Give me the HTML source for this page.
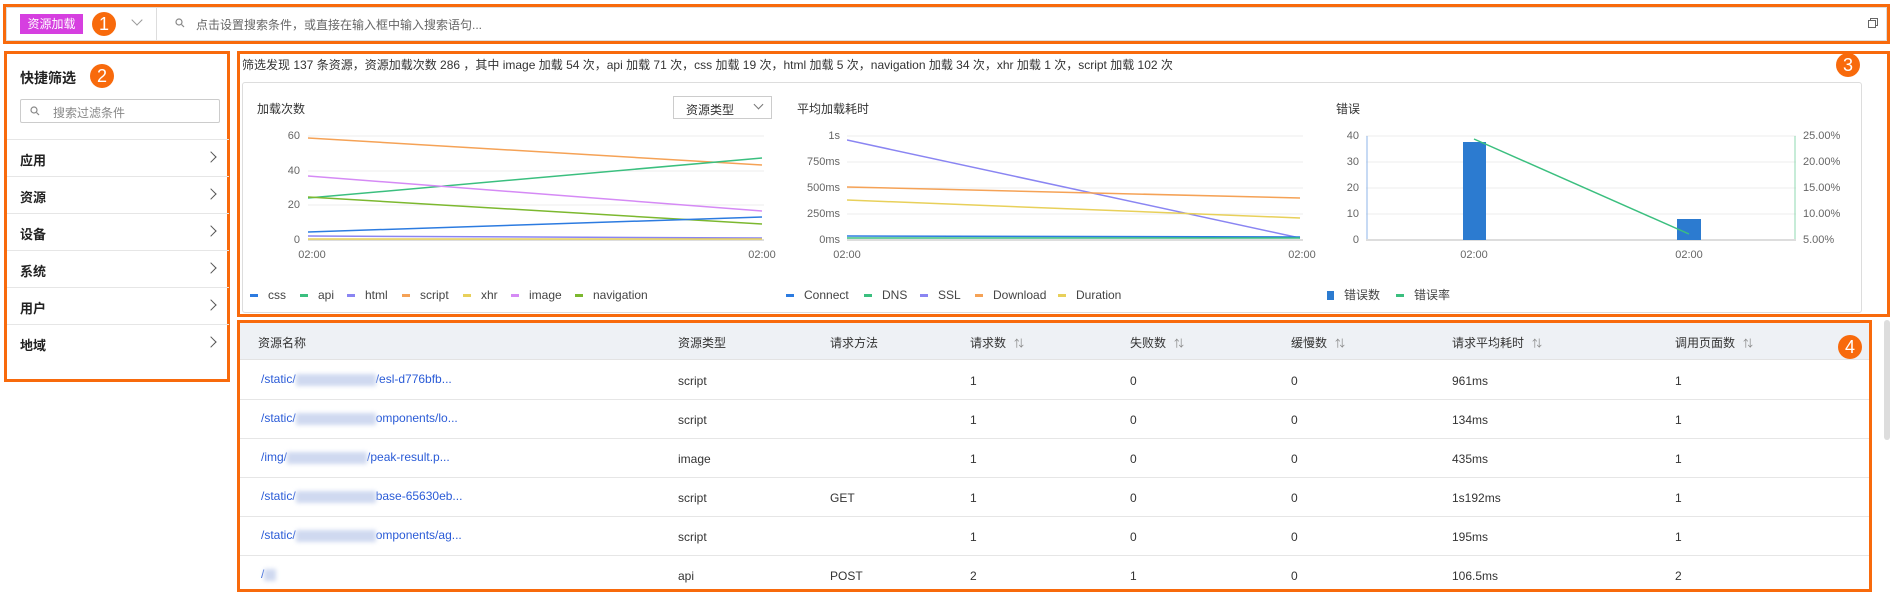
<!DOCTYPE html>
<html><head><meta charset="utf-8"><style>
*{box-sizing:border-box;margin:0;padding:0}
body{width:1892px;height:592px;background:#fff;position:relative;overflow:hidden;font-family:"Liberation Sans","Noto Sans CJK SC",sans-serif;font-size:12px;color:#333}
.a{position:absolute;white-space:nowrap}
.ob{position:absolute;border:3px solid #f86a0c}
.circ{position:absolute;width:24px;height:24px;border-radius:50%;background:#f86a0c;color:#fff;font-size:18px;text-align:center;line-height:24px}
.row{position:absolute;left:7px;width:222px;height:37px;border-top:1px solid #e6e6e6;font-size:13px;font-weight:bold;color:#222}
.row span{position:absolute;left:13px;top:10px}
.row i{position:absolute;left:200px;top:13px;width:8px;height:8px;border-right:1.6px solid #555;border-top:1.6px solid #555;transform:rotate(45deg)}
.ax{position:absolute;font-size:11px;color:#666;text-align:right}
.th{position:absolute;font-size:12px;color:#333;top:334px}
.td{position:absolute;font-size:12px;color:#333}
.lk{color:#2a5bd7}
.blur{display:inline-block;width:80px;height:12px;background:#cfd9f0;filter:blur(2px);vertical-align:middle}
.sort{color:#888;font-size:10px;margin-left:8px}
.lg{position:absolute;font-size:12px;color:#444;top:288px}
.lg b{display:inline-block;width:8px;height:3px;vertical-align:middle;margin-right:10px}
</style></head><body>
<!-- top bar -->
<div class="ob" style="left:3px;top:4px;width:1887px;height:40px;border-width:3px"></div>
<div class="a" style="left:6px;top:7px;width:1881px;height:34px;border:1px solid #ddd"></div>
<div class="a" style="left:156px;top:8px;width:1px;height:32px;background:#ddd"></div>
<div class="a" style="left:20px;top:14px;width:63px;height:20px;background:#d63fe0;color:#fff;font-size:12px;text-align:center;line-height:20px">资源加载</div>
<div class="circ" style="left:92px;top:12px">1</div>
<div class="a" style="left:133px;top:16px;width:8px;height:8px;border-right:1.3px solid #999;border-bottom:1.3px solid #999;transform:rotate(45deg)"></div>
<svg class="a" style="left:175px;top:18px" width="10" height="10"><circle cx="4" cy="4" r="3" fill="none" stroke="#888" stroke-width="1.2"/><line x1="6.5" y1="6.5" x2="9" y2="9" stroke="#888" stroke-width="1.2"/></svg>
<div class="a" style="left:196px;top:16px;color:#666;font-size:12px">点击设置搜索条件，或直接在输入框中输入搜索语句...</div>
<svg class="a" style="left:1868px;top:18px" width="10" height="10"><rect x="0.5" y="2.5" width="7" height="7" fill="none" stroke="#666"/><path d="M2.5 2.5V0.5H9.5V7.5H7.5" fill="none" stroke="#666"/></svg>

<!-- sidebar -->
<div class="ob" style="left:4px;top:51px;width:226px;height:331px"></div>
<div class="a" style="left:20px;top:68px;font-size:14px;font-weight:bold;color:#222">快捷筛选</div>
<div class="circ" style="left:90px;top:64px">2</div>
<div class="a" style="left:20px;top:99px;width:200px;height:24px;border:1px solid #ccc;border-radius:2px"></div>
<svg class="a" style="left:30px;top:106px" width="10" height="10"><circle cx="4" cy="4" r="3" fill="none" stroke="#888" stroke-width="1.2"/><line x1="6.5" y1="6.5" x2="9" y2="9" stroke="#888" stroke-width="1.2"/></svg>
<div class="a" style="left:53px;top:104px;color:#888;font-size:12px">搜索过滤条件</div>
<div class="row" style="top:139px"><span>应用</span><i></i></div>
<div class="row" style="top:176px"><span>资源</span><i></i></div>
<div class="row" style="top:213px"><span>设备</span><i></i></div>
<div class="row" style="top:250px"><span>系统</span><i></i></div>
<div class="row" style="top:287px"><span>用户</span><i></i></div>
<div class="row" style="top:324px"><span>地域</span><i></i></div>

<!-- chart section -->
<div class="ob" style="left:237px;top:51px;width:1653px;height:266px"></div>
<div class="a" style="left:242px;top:56px;font-size:12px;color:#333">筛选发现 137 条资源，资源加载次数 286 ，其中 image 加载 54 次，api 加载 71 次，css 加载 19 次，html 加载 5 次，navigation 加载 34 次，xhr 加载 1 次，script 加载 102 次</div>
<div class="circ" style="left:1836px;top:53px">3</div>
<div class="a" style="left:242px;top:82px;width:1620px;height:231px;border:1px solid #ddd;border-radius:3px"></div>

<div class="a" style="left:257px;top:100px;font-size:12px">加载次数</div>
<div class="a" style="left:673px;top:96px;width:99px;height:23px;border:1px solid #ccc;font-size:12px;padding:4px 0 0 12px">资源类型</div>
<div class="a" style="left:755px;top:101px;width:7px;height:7px;border-right:1.2px solid #777;border-bottom:1.2px solid #777;transform:rotate(45deg)"></div>
<div class="ax" style="left:270px;top:130px;width:30px">60</div>
<div class="ax" style="left:270px;top:165px;width:30px">40</div>
<div class="ax" style="left:270px;top:199px;width:30px">20</div>
<div class="ax" style="left:270px;top:234px;width:30px">0</div>
<div class="ax" style="left:292px;top:249px;width:40px;text-align:center">02:00</div>
<div class="ax" style="left:742px;top:249px;width:40px;text-align:center">02:00</div>
<svg class="a" style="left:308px;top:130px" width="456" height="115">
<g stroke="#eee"><line x1="0" y1="6" x2="456" y2="6"/><line x1="0" y1="41" x2="456" y2="41"/><line x1="0" y1="75" x2="456" y2="75"/></g>
<line x1="0" y1="110" x2="456" y2="110" stroke="#ddd" stroke-width="2"/>
<g fill="none" stroke-width="1.5">
<line x1="0" y1="8" x2="454" y2="35" stroke="#f5a256"/>
<line x1="0" y1="68" x2="454" y2="28" stroke="#3bbf7f"/>
<line x1="0" y1="46" x2="454" y2="81" stroke="#d58af5"/>
<line x1="0" y1="67" x2="454" y2="94" stroke="#7cb82f"/>
<line x1="0" y1="102" x2="454" y2="87" stroke="#2c7be0"/>
<line x1="0" y1="106" x2="454" y2="108" stroke="#8a85f2"/>
<line x1="0" y1="109" x2="454" y2="109" stroke="#e8d05a"/>
</g></svg>
<div class="lg" style="left:250px"><b style="background:#2c7be0"></b>css</div>
<div class="lg" style="left:300px"><b style="background:#3bbf7f"></b>api</div>
<div class="lg" style="left:347px"><b style="background:#8a85f2"></b>html</div>
<div class="lg" style="left:402px"><b style="background:#f5a256"></b>script</div>
<div class="lg" style="left:463px"><b style="background:#e8d05a"></b>xhr</div>
<div class="lg" style="left:511px"><b style="background:#d58af5"></b>image</div>
<div class="lg" style="left:575px"><b style="background:#7cb82f"></b>navigation</div>

<div class="a" style="left:797px;top:100px;font-size:12px">平均加载耗时</div>
<div class="ax" style="left:790px;top:130px;width:50px">1s</div>
<div class="ax" style="left:790px;top:156px;width:50px">750ms</div>
<div class="ax" style="left:790px;top:182px;width:50px">500ms</div>
<div class="ax" style="left:790px;top:208px;width:50px">250ms</div>
<div class="ax" style="left:790px;top:234px;width:50px">0ms</div>
<div class="ax" style="left:827px;top:249px;width:40px;text-align:center">02:00</div>
<div class="ax" style="left:1282px;top:249px;width:40px;text-align:center">02:00</div>
<svg class="a" style="left:847px;top:130px" width="456" height="115">
<g stroke="#eee"><line x1="0" y1="6" x2="456" y2="6"/><line x1="0" y1="32" x2="456" y2="32"/><line x1="0" y1="58" x2="456" y2="58"/><line x1="0" y1="84" x2="456" y2="84"/></g>
<line x1="0" y1="110" x2="456" y2="110" stroke="#ddd" stroke-width="2"/>
<g fill="none" stroke-width="1.5">
<line x1="0" y1="10" x2="453" y2="108" stroke="#8a85f2"/>
<line x1="0" y1="57" x2="453" y2="68" stroke="#f5a256"/>
<line x1="0" y1="70" x2="453" y2="88" stroke="#e8d05a"/>
<line x1="0" y1="106" x2="453" y2="107" stroke="#2c7be0"/>
<line x1="0" y1="108" x2="453" y2="108" stroke="#3bbf7f"/>
</g></svg>
<div class="lg" style="left:786px"><b style="background:#2c7be0"></b>Connect</div>
<div class="lg" style="left:864px"><b style="background:#3bbf7f"></b>DNS</div>
<div class="lg" style="left:920px"><b style="background:#8a85f2"></b>SSL</div>
<div class="lg" style="left:975px"><b style="background:#f5a256"></b>Download</div>
<div class="lg" style="left:1058px"><b style="background:#e8d05a"></b>Duration</div>

<div class="a" style="left:1336px;top:100px;font-size:12px">错误</div>
<div class="ax" style="left:1335px;top:130px;width:24px">40</div>
<div class="ax" style="left:1335px;top:156px;width:24px">30</div>
<div class="ax" style="left:1335px;top:182px;width:24px">20</div>
<div class="ax" style="left:1335px;top:208px;width:24px">10</div>
<div class="ax" style="left:1335px;top:234px;width:24px">0</div>
<div class="ax" style="left:1803px;top:130px;text-align:left">25.00%</div>
<div class="ax" style="left:1803px;top:156px;text-align:left">20.00%</div>
<div class="ax" style="left:1803px;top:182px;text-align:left">15.00%</div>
<div class="ax" style="left:1803px;top:208px;text-align:left">10.00%</div>
<div class="ax" style="left:1803px;top:234px;text-align:left">5.00%</div>
<div class="ax" style="left:1454px;top:249px;width:40px;text-align:center">02:00</div>
<div class="ax" style="left:1669px;top:249px;width:40px;text-align:center">02:00</div>
<svg class="a" style="left:1366px;top:130px" width="432" height="115">
<g stroke="#eee"><line x1="0" y1="6" x2="430" y2="6"/><line x1="0" y1="32" x2="430" y2="32"/><line x1="0" y1="58" x2="430" y2="58"/><line x1="0" y1="84" x2="430" y2="84"/></g>
<line x1="1" y1="6" x2="1" y2="110" stroke="#8fb6e8"/>
<line x1="429" y1="6" x2="429" y2="110" stroke="#8fd8b0"/>
<line x1="0" y1="110" x2="430" y2="110" stroke="#ddd" stroke-width="2"/>
<rect x="97" y="12" width="23" height="98" fill="#2c7bd0"/>
<rect x="311" y="89" width="24" height="21" fill="#2c7bd0"/>
<line x1="108" y1="9" x2="323" y2="104" stroke="#3bbf7f" stroke-width="1.5"/>
</svg>
<div class="lg" style="left:1327px;top:286px"><b style="background:#2c7bd0;width:7px;height:9px"></b>错误数</div>
<div class="lg" style="left:1396px;top:286px"><b style="background:#3bbf7f"></b>错误率</div>

<!-- table -->
<div class="ob" style="left:237px;top:320px;width:1635px;height:272px"></div>
<div class="a" style="left:1884px;top:320px;width:6px;height:120px;background:#ddd;border-radius:3px"></div>
<div class="a" style="left:240px;top:323px;width:1629px;height:37px;background:#eef1f5;border-bottom:1px solid #e3e3e3"></div>
<div class="th" style="left:258px">资源名称</div>
<div class="th" style="left:678px">资源类型</div>
<div class="th" style="left:830px">请求方法</div>
<div class="th" style="left:970px">请求数<span class="sort">⇅</span></div>
<div class="th" style="left:1130px">失败数<span class="sort">⇅</span></div>
<div class="th" style="left:1291px">缓慢数<span class="sort">⇅</span></div>
<div class="th" style="left:1452px">请求平均耗时<span class="sort">⇅</span></div>
<div class="th" style="left:1675px">调用页面数<span class="sort">⇅</span></div>
<div class="circ" style="left:1838px;top:335px">4</div>

<div class="a" style="left:240px;top:399px;width:1629px;height:1px;background:#e6e6e6"></div>
<div class="a" style="left:240px;top:438px;width:1629px;height:1px;background:#e6e6e6"></div>
<div class="a" style="left:240px;top:477px;width:1629px;height:1px;background:#e6e6e6"></div>
<div class="a" style="left:240px;top:516px;width:1629px;height:1px;background:#e6e6e6"></div>
<div class="a" style="left:240px;top:555px;width:1629px;height:1px;background:#e6e6e6"></div>

<div class="td lk" style="left:261px;top:372px">/static/<span class="blur"></span>/esl-d776bfb...</div>
<div class="td lk" style="left:261px;top:411px">/static/<span class="blur"></span>omponents/lo...</div>
<div class="td lk" style="left:261px;top:450px">/img/<span class="blur"></span>/peak-result.p...</div>
<div class="td lk" style="left:261px;top:489px">/static/<span class="blur"></span>base-65630eb...</div>
<div class="td lk" style="left:261px;top:528px">/static/<span class="blur"></span>omponents/ag...</div>
<div class="td lk" style="left:261px;top:567px">/<span class="blur" style="width:12px"></span></div>

<div class="td" style="left:678px;top:374px">script</div>
<div class="td" style="left:678px;top:413px">script</div>
<div class="td" style="left:678px;top:452px">image</div>
<div class="td" style="left:678px;top:491px">script</div>
<div class="td" style="left:678px;top:530px">script</div>
<div class="td" style="left:678px;top:569px">api</div>
<div class="td" style="left:830px;top:491px">GET</div>
<div class="td" style="left:830px;top:569px">POST</div>

<div class="td" style="left:970px;top:374px">1</div><div class="td" style="left:1130px;top:374px">0</div><div class="td" style="left:1291px;top:374px">0</div><div class="td" style="left:1452px;top:374px">961ms</div><div class="td" style="left:1675px;top:374px">1</div>
<div class="td" style="left:970px;top:413px">1</div><div class="td" style="left:1130px;top:413px">0</div><div class="td" style="left:1291px;top:413px">0</div><div class="td" style="left:1452px;top:413px">134ms</div><div class="td" style="left:1675px;top:413px">1</div>
<div class="td" style="left:970px;top:452px">1</div><div class="td" style="left:1130px;top:452px">0</div><div class="td" style="left:1291px;top:452px">0</div><div class="td" style="left:1452px;top:452px">435ms</div><div class="td" style="left:1675px;top:452px">1</div>
<div class="td" style="left:970px;top:491px">1</div><div class="td" style="left:1130px;top:491px">0</div><div class="td" style="left:1291px;top:491px">0</div><div class="td" style="left:1452px;top:491px">1s192ms</div><div class="td" style="left:1675px;top:491px">1</div>
<div class="td" style="left:970px;top:530px">1</div><div class="td" style="left:1130px;top:530px">0</div><div class="td" style="left:1291px;top:530px">0</div><div class="td" style="left:1452px;top:530px">195ms</div><div class="td" style="left:1675px;top:530px">1</div>
<div class="td" style="left:970px;top:569px">2</div><div class="td" style="left:1130px;top:569px">1</div><div class="td" style="left:1291px;top:569px">0</div><div class="td" style="left:1452px;top:569px">106.5ms</div><div class="td" style="left:1675px;top:569px">2</div>
</body></html>
